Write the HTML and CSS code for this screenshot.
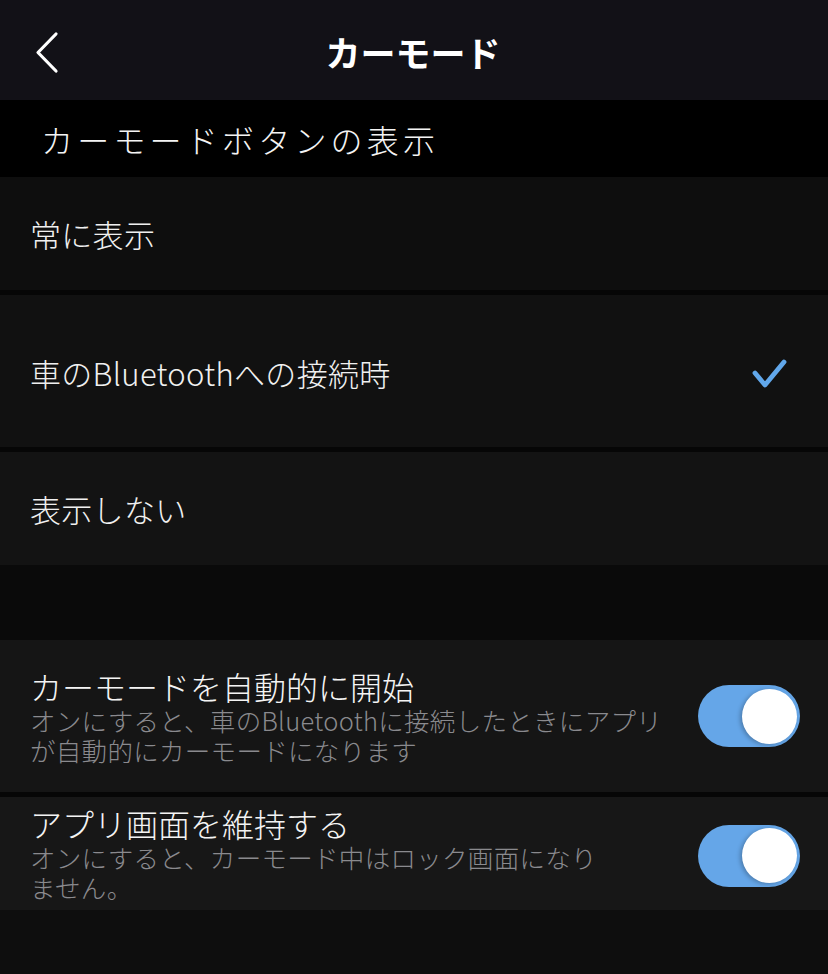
FILE: index.html
```html
<!DOCTYPE html>
<html lang="ja">
<head>
    <meta charset="UTF-8">
    <meta name="viewport" content="width=device-width, initial-scale=1.0">
    <title>カーモード</title>
    <link rel="stylesheet" href="styles.css">
</head>
<body>

    <!-- NAV BAR -->
    <div class="nav-bar">
        <div class="nav-back">
            <svg width="30" height="44" viewBox="0 0 30 44">
                <path d="M22 3 L4 21.5 L22 40" fill="none" stroke="#ffffff" stroke-width="3.2" stroke-linecap="round" stroke-linejoin="round"/>
            </svg>
        </div>
        <div class="nav-title">カーモード</div>
        <div></div>
    </div>

    <div class="section-title">カーモードボタンの表示</div>

    <!-- BUTTON DISPLAY OPTIONS -->
    <div class="option-list">
        <div class="option-row row-1">常に表示</div>
        <div class="option-row row-2 tall">
            <span>車のBluetoothへの接続時</span>
            <svg class="check" width="40" height="34" viewBox="0 0 40 34">
                <path d="M5 16 L15 28 L34 5" fill="none" stroke="#61a7ea" stroke-width="4.8" stroke-linecap="round" stroke-linejoin="round"/>
            </svg>
        </div>
        <div class="option-row row-3">表示しない</div>
    </div>

    <div class="spacer"></div>

    <!-- SWITCH SETTINGS -->
    <div class="option-list">
        <div class="switch-row row-4 tall">
            <div class="switch-text">
                <div class="switch-label">カーモードを自動的に開始</div>
                <div class="switch-desc">オンにすると、車のBluetoothに接続したときにアプリが自動的にカーモードになります</div>
            </div>
            <div class="toggle on"><div class="knob"></div></div>
        </div>
        <div class="switch-row row-5">
            <div class="switch-text">
                <div class="switch-label">アプリ画面を維持する</div>
                <div class="switch-desc">オンにすると、カーモード中はロック画面になり<br>ません。</div>
            </div>
            <div class="toggle on"><div class="knob"></div></div>
        </div>
    </div>

    <div class="bottom-fill"></div>

</body>
</html>
```

FILE: styles.css
```css
body {
    margin: 0;
    background-color: #0e0e0e;
    font-family: "Noto Sans CJK JP", "Noto Sans", sans-serif;
    font-weight: 300;
    color: #f2f2f2;
    width: 828px;
}
.nav-bar {
    height: 100px;
    background-color: #121117;
    display: grid;
    grid-template-columns: 1fr auto 1fr;
    align-items: center;
}
.nav-back {
    padding-left: 34px;
    padding-top: 6px;
    display: flex;
}
.nav-title {
    font-size: 35px;
    font-weight: 700;
    color: #ffffff;
    padding-top: 2px;
    padding-right: 2px;
}
.section-title {
    height: 77px;
    background-color: #000000;
    display: flex;
    align-items: center;
    padding-left: 41px;
    font-size: 32px;
    letter-spacing: 4.2px;
    color: #f4f4f4;
}
.option-list {
    display: flex;
    flex-direction: column;
    gap: 5px;
    background-color: #060606;
}
.option-row {
    height: 113px;
    display: flex;
    align-items: center;
    justify-content: space-between;
    padding: 0 38px 0 30px;
    font-size: 31px;
    letter-spacing: 0.3px;
    color: #f0f0f0;
}
.row-1 { background-color: #0e0e0e; }
.row-2 { background-color: #111111; }
.row-3 { background-color: #131313; }
.row-4 { background-color: #151515; }
.row-5 { background-color: #171717; }
.option-row span {
    padding-top: 2px;
}
.check {
    margin-top: 6px;
}
.spacer {
    height: 75px;
    background-color: #0a0a0a;
}
.switch-row {
    height: 113px;
    display: flex;
    align-items: center;
    justify-content: space-between;
    padding: 0 28px 0 30px;
}
.option-row.tall,
.switch-row.tall {
    height: 152px;
}
.switch-text {
    width: 638px;
}
.switch-label {
    font-size: 32px;
    line-height: 37px;
    color: #f4f4f4;
}
.switch-desc {
    font-size: 25.5px;
    line-height: 30px;
    letter-spacing: 0.3px;
    color: #8a8a8e;
}
.toggle {
    width: 102px;
    height: 62px;
    border-radius: 31px;
    background-color: #3a3a3c;
    display: flex;
    align-items: center;
    padding: 0 3px;
    box-sizing: border-box;
    flex-shrink: 0;
}
.toggle.on {
    background-color: #65a6e8;
    justify-content: flex-end;
}
.row-5 .toggle {
    margin-top: 4px;
}
.knob {
    width: 55px;
    height: 55px;
    border-radius: 50%;
    background-color: #ffffff;
    box-shadow: -2px 1px 4px rgba(0, 0, 0, 0.25);
}
.bottom-fill {
    height: 64px;
    background-color: #0e0e0e;
}
```
